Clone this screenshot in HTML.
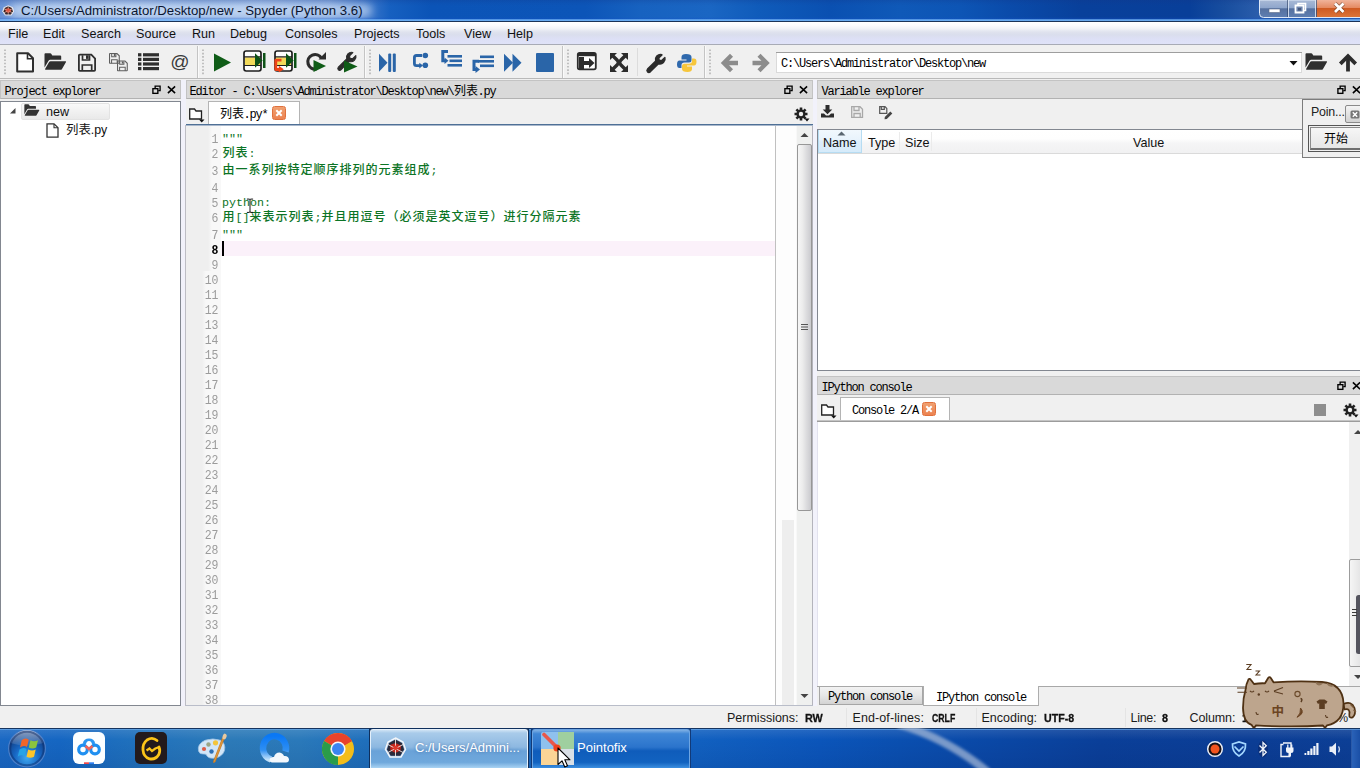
<!DOCTYPE html>
<html lang="zh">
<head>
<meta charset="utf-8">
<title>C:/Users/Administrator/Desktop/new - Spyder (Python 3.6)</title>
<style>
html,body{margin:0;padding:0;width:1360px;height:768px;overflow:hidden;background:#f0f0f0}
body{position:relative;font-family:"Liberation Sans","Noto Sans CJK SC",sans-serif;font-size:12px;color:#000;line-height:1}
div,span,svg{position:absolute;box-sizing:border-box;white-space:pre}
.ui{font-family:"Liberation Sans","Noto Sans CJK SC",sans-serif;font-size:12.6px;color:#111}
.sim{font-family:"Liberation Mono","Noto Serif CJK SC",monospace;font-size:12px;letter-spacing:-1.2px;color:#000;margin-top:.5px}
.code{font-family:"Liberation Mono","Noto Sans CJK SC",monospace;font-size:11.67px;color:#0c7425}
.ln{font-family:"Liberation Mono",monospace;font-size:11.5px;color:#9c9c9c;width:32.500px;height:15px;line-height:15px;text-align:right;left:0;margin-top:2px;transform:scaleY(1.06)}
#titlebar{left:0;top:0;width:1360px;height:22px;background:linear-gradient(to right,#6a93d6 0,#82a8df 40px,#98b8e6 120px,#8aaee2 200px,#90b2e4 260px,#779fdb 330px,#457ccc 362px,#1660c0 390px,#0b54b7 430px,#0c55b8 585px,#1762c0 640px,#1a66c3 710px,#0f5bba 760px,#0a50b1 830px,#0f59b8 900px,#0d55b5 960px,#0a4baa 1010px,#08409b 1080px,#083f99 1190px,#184e9f 1225px,#2a5dab 1258px,#2a5dab 1360px)}
#titlebar .shade{left:0;top:0;width:1360px;height:22px;background:linear-gradient(to bottom,rgba(20,50,130,.22) 0,rgba(20,50,130,.08) 3px,rgba(255,255,255,0) 6px,rgba(255,255,255,0) 17px,rgba(20,80,200,.25) 18.500px,rgba(120,185,250,.85) 19.800px,rgba(120,185,250,.85) 20.600px,#1a3358 21px,#1a3358 22px)}
#title{left:21px;top:4px;font-size:13.2px;color:#0a1530;letter-spacing:0}
#menubar{left:0;top:22px;width:1360px;height:23px;background:linear-gradient(to bottom,#fff 0,#fbfbfd 15%,#f0f2f7 30%,#dfe2ee 46%,#dadeed 58%,#dde0f6 78%,#dfe2f8 100%);border-bottom:1px solid #a8abb6}
#menubar span{top:6px}
#toolbar{left:0;top:45px;width:1360px;height:34px;background:#f0f0f0;border-bottom:1px solid #b9b9b9}
.dock{height:19px;top:80px;background:#d9d9d9;border:1px solid #c3c3c3;border-bottom-color:#b2b2b2}
.dock span.sim{top:4px;left:3.500px}
.panel{background:#fff;border:1px solid #828790}
</style>
</head>
<body>
<div id="titlebar"><div style="left:10px;top:4px;width:362px;height:13px;background:rgba(228,238,252,.6);filter:blur(4px);border-radius:6px"></div><div class="shade"></div>
<svg style="left:1.500px;top:4.500px" width="12.500" height="11.500" viewBox="0 0 23 23" preserveAspectRatio="none"><path d="M11.500 .5 20 4.500 22.500 12.500 17.500 21H5.500L.500 12.500 3 4.500z" fill="#f2efee" opacity=".85"/><path d="M11.500 2.500 18 6 20 12.500 16.300 18.800H6.700L3 12.500 5 6z" fill="#3a2526"/><path d="M6 8 11.500 6 17 8.500 16.500 13.500 11.500 16 6.500 13.500z" fill="#c9402c"/><path d="M11.500 2V20M3 7 20 16M20 7 3 16" stroke="#f0dcd4" stroke-width="1.300" fill="none" opacity=".8"/><circle cx="11.500" cy="10.800" r="2.600" fill="#e0533c"/></svg>
<span id="title">C:/Users/Administrator/Desktop/new - Spyder (Python 3.6)</span>
<svg style="left:1258px;top:0" width="102" height="19" viewBox="0 0 102 19">
<defs>
<linearGradient id="gb" x1="0" y1="0" x2="0" y2="1"><stop offset="0" stop-color="#a9bad6"/><stop offset=".45" stop-color="#8fa6cc"/><stop offset=".5" stop-color="#55709f"/><stop offset="1" stop-color="#5f7fb2"/></linearGradient>
<linearGradient id="gr" x1="0" y1="0" x2="0" y2="1"><stop offset="0" stop-color="#f0b39a"/><stop offset=".45" stop-color="#e58a62"/><stop offset=".5" stop-color="#cf5a22"/><stop offset="1" stop-color="#dc7438"/></linearGradient>
</defs>
<path d="M1.5 0V13.500Q1.500 17.500 5.500 17.500H102V0z" fill="url(#gb)" stroke="#dfe9f7" stroke-width="1"/>
<path d="M58.500 0V17H102V0z" fill="url(#gr)"/>
<path d="M30.500 0V17M57.500 0V17" stroke="#dfe9f7" stroke-width="1" opacity=".85"/>
<path d="M29.500 0V17M58.500 0V17" stroke="#2b3f63" stroke-width="1" opacity=".6"/>
<rect x="11" y="9" width="11" height="3.500" fill="#fff" stroke="#5a6a88" stroke-width=".6"/>
<path d="M40 3.500H47.500V10.500H40z" fill="none" stroke="#fff" stroke-width="1.600"/><path d="M37.500 5.500H45.500V12.500H37.500z" fill="#6d84ad" stroke="#fff" stroke-width="1.800"/><rect x="40" y="8" width="3" height="2.500" fill="#46597e"/>
<path d="M77 3.500 85.500 12M85.500 3.500 77 12" stroke="#4a2a1a" stroke-width="4.200" opacity=".55"/><path d="M77 3.500 85.500 12M85.500 3.500 77 12" stroke="#fff" stroke-width="2.800" stroke-linecap="butt"/>
</svg>
</div>
<div id="menubar" class="ui">
<span style="left:8px">File</span><span style="left:43px">Edit</span><span style="left:81px">Search</span><span style="left:136px">Source</span><span style="left:192px">Run</span><span style="left:230px">Debug</span><span style="left:285px">Consoles</span><span style="left:354px">Projects</span><span style="left:416px">Tools</span><span style="left:464px">View</span><span style="left:507px">Help</span>
</div>
<div id="toolbar">
<svg style="left:0;top:0" width="1360" height="34" viewBox="0 45 1360 34">
<defs>
<g id="hdl"><path d="M0.500 49.500V75.500" stroke="#b4b4b4" stroke-width="1.600" stroke-dasharray="1.600 1.700" fill="none"/></g>
<g id="sep"><path d="M0.500 46V78" stroke="#c4c4c4" stroke-width="1"/><path d="M1.500 46V78" stroke="#fafafa" stroke-width="1"/></g>
<g id="fold"><path d="M0.500 1.200Q0.500 .3 1.400 .3H6.200Q7 .3 7.400 1L8.300 2.600H16.200Q17.200 2.600 17.200 3.600V6.800H6.200Q5 6.800 4.400 7.900L0.500 14.600z"/><path d="M6.600 8.300H21.400Q22.500 8.300 21.900 9.300L18 15.900Q17.500 16.800 16.400 16.800H1.700Q.6 16.800 1.200 15.800L5 9.200Q5.500 8.300 6.600 8.300z"/></g>
<g id="flop"><path d="M1.800 .9H13.300L17.100 4.700V16.200Q17.100 17.100 16.200 17.100H1.800Q.9 17.100 .9 16.200V1.800Q.9 .9 1.800 .9z" fill="none" stroke-width="1.800"/><path d="M4.500 1.500V6.200H11.500V1.500" fill="none" stroke-width="1.700"/><rect x="8" y="1.500" width="2.600" height="3.600" stroke="none"/><path d="M4.300 17V11.200H13.700V17" fill="none" stroke-width="1.700"/></g>
<g id="wr"><path d="M19.300 3.200 15.900 6.600 13.200 6.100 12.700 3.400 16.100 0Q13.300-.9 10.900 1.400 8.800 3.700 9.700 6.700L.9 15.500Q-.3 16.900.9 18.200 2.300 19.400 3.600 18.200L12.400 9.400Q15.500 10.400 17.800 8.200 20.100 5.800 19.300 3.200z"/></g>
</defs>
<use href="#hdl" x="4.500"/>
<!-- new file -->
<path d="M17.200 53.200H28L33 58.200V71.500H17.200z" fill="#fff" stroke="#2f2f2f" stroke-width="2" stroke-linejoin="round"/><path d="M27.500 53.500V58.700H32.700" fill="none" stroke="#2f2f2f" stroke-width="1.600"/>
<!-- open -->
<use href="#fold" x="44" y="53" fill="#2f2f2f"/>
<!-- save -->
<use href="#flop" x="78" y="53.800" fill="#2f2f2f" stroke="#2f2f2f"/>
<!-- save all -->
<g fill="#5e5e5e" stroke="#5e5e5e"><use href="#flop" transform="translate(109 53) scale(.6)"/><use href="#flop" transform="translate(117 60.500) scale(.6)"/></g>
<!-- list -->
<g fill="#2f2f2f"><rect x="138" y="53.200" width="3.400" height="3.200"/><rect x="143" y="53.200" width="16" height="3.200"/><rect x="138" y="57.800" width="3.400" height="3.200"/><rect x="143" y="57.800" width="16" height="3.200"/><rect x="138" y="62.400" width="3.400" height="3.200"/><rect x="143" y="62.400" width="16" height="3.200"/><rect x="138" y="67" width="3.400" height="3.200"/><rect x="143" y="67" width="16" height="3.200"/></g>
<text x="170.300" y="68.300" font-family="Liberation Sans, sans-serif" font-size="19" fill="#3a3a3a">@</text>
<use href="#sep" x="197"/><use href="#hdl" x="202.500"/>
<!-- run -->
<path d="M214 53.500 231 62.500 214 71.500z" fill="#0f5c17"/>
<!-- run cell -->
<g id="cell"><rect x="244" y="51" width="17" height="20" rx="2.200" fill="#fdfdfd" stroke="#1e1e1e" stroke-width="1.700"/><rect x="245" y="57.300" width="15" height="7.700" fill="#f2da5a"/><path d="M244 56.800H261M244 65.500H261" stroke="#1e1e1e" stroke-width="1.200"/><path d="M255 53.200 262.600 60.500 255 67.800z" fill="#0d5216"/><rect x="263" y="53" width="2.500" height="15" fill="#0d5216"/></g>
<use href="#cell" x="31"/>
<path d="M281.500 60.200H275.800V69.500H279.500" fill="none" stroke="#ee4418" stroke-width="2.800" stroke-linejoin="round"/><path d="M278.800 65.800 283.800 69.300 278.800 72.500z" fill="#ee4418"/>
<!-- rerun -->
<path d="M321.500 58.200A7.300 7.300 0 1 0 316.500 69" fill="none" stroke="#2c2c2c" stroke-width="3.200"/><path d="M326 52V59.500H318.500z" fill="#2c2c2c"/><path d="M313.500 60 326 66 313.500 72z" fill="#0f5c17"/>
<!-- wrench run -->
<use href="#wr" transform="translate(337.500 52.500) scale(.95)" fill="#2c2c2c" stroke="#2c2c2c" stroke-width="1.200" stroke-linejoin="round"/><path d="M344 60.500 357.500 66.500 344 72.500z" fill="#0f5c17"/>
<use href="#sep" x="364"/><use href="#hdl" x="369.500"/>
<!-- debug -->
<g fill="#2a65a8">
<path d="M379 53.800 387.500 62.800 379 71.800z"/><rect x="388.200" y="53.500" width="3" height="18.500" rx="1"/><rect x="392.800" y="53.500" width="3" height="18.500" rx="1"/>
<path d="M422 55.500H416.500Q414.400 55.500 414.400 57.600V63.500Q414.400 65.600 416.500 65.600H420" fill="none" stroke="#2a65a8" stroke-width="2.800"/><path d="M419.300 62.800 423 65.600 419.300 68.400z"/><circle cx="425.300" cy="55.500" r="2.800"/><circle cx="425.300" cy="65.300" r="2.800"/>
<rect x="447.500" y="55" width="14.500" height="2.600"/><rect x="449.500" y="59.500" width="12.500" height="2.600"/><rect x="447.500" y="64" width="14.500" height="2.600"/><path d="M448 51.500H442.800V60.800H445" fill="none" stroke="#2a65a8" stroke-width="3"/><path d="M444.500 57.500 448.500 60.800 444.500 64.100z"/>
<rect x="480" y="55.500" width="14" height="2.600"/><rect x="478" y="60" width="16" height="2.600"/><rect x="480" y="64.500" width="14" height="2.600"/><path d="M479 61.300H474V69.500H476.500" fill="none" stroke="#2a65a8" stroke-width="3"/><path d="M475.500 66 480 69.600 475.500 73z"/>
<path d="M504 53.800 513 62.800 504 71.800z"/><path d="M512.500 53.800 521.500 62.800 512.500 71.800z"/>
<rect x="536" y="53" width="18" height="19" rx="1"/>
</g>
<use href="#sep" x="562"/><use href="#hdl" x="567.500"/>
<!-- maximize pane -->
<rect x="577.800" y="52.800" width="18" height="16.600" rx="1.800" fill="#fff" stroke="#2c2c2c" stroke-width="1.800"/><rect x="578" y="53" width="17.500" height="3.200" fill="#2c2c2c"/><path d="M579 57H584V61H589V58L594.500 63 589 68V65H584V69H579z" fill="#2c2c2c"/>
<!-- fullscreen -->
<g fill="#2c2c2c"><path d="M610 53H617L614.700 55.300 619 59.600 616.600 62 612.300 57.700 610 60z"/><path d="M628 53V60L625.700 57.700 621.400 62 619 59.600 623.300 55.300 621 53z"/><path d="M610 72V65L612.300 67.300 616.600 63 619 65.400 614.700 69.700 617 72z"/><path d="M628 72H621L623.300 69.700 619 65.400 621.400 63 625.700 67.300 628 65z"/><rect x="616.500" y="60" width="5" height="5"/></g>
<path d="M637.500 48V76" stroke="#dcdcdc" stroke-width="1"/>
<use href="#wr" transform="translate(646.800 54.800) scale(.93)" fill="#2c2c2c" stroke="#2c2c2c" stroke-width="1.900" stroke-linejoin="round"/>
<!-- python -->
<path d="M686 54Q681.500 54 681.500 57V59.500H686.500V60.500H679.500Q677 60.500 677 64.500 677 68 679.500 68H681.500V65Q681.500 62.500 684.500 62.500H689Q691.500 62.500 691.500 60V57Q691.500 54 686 54z" fill="#2f69ad"/><path d="M687.500 72Q692 72 692 69V66.500H687V65.500H694Q696.500 65.500 696.500 61.800 696.500 58.500 694 58.500H692V61Q692 63.800 689 63.800H684.500Q682 63.800 682 66.500V69Q682 72 687.500 72z" fill="#f6c63c"/>
<use href="#sep" x="704"/><use href="#hdl" x="709.500"/>
<!-- back / forward -->
<g fill="none" stroke="#8c8c8c" stroke-width="4.300"><path d="M738 63H724M731.500 55.300 723.800 63 731.500 70.700"/><path d="M752.500 63H766.500M759 55.300 766.700 63 759 70.700"/></g>
<!-- path combo -->
<rect x="776.500" y="52.500" width="525" height="20" fill="#fff" stroke="#dadada"/><path d="M776 52.500H1302" stroke="#9e9e9e"/>
<path d="M1289.500 61H1297.500L1293.500 65.500z" fill="#111"/>
<use href="#fold" x="1305" y="53" fill="#2f2f2f"/>
<path d="M1348 71.500V57" stroke="#2c2c2c" stroke-width="3.800"/><path d="M1340.300 63.800 1348 56.200 1355.700 63.800" fill="none" stroke="#2c2c2c" stroke-width="3.800"/>
</svg>
<span class="sim" style="left:781px;top:12px">C:\Users\Administrator\Desktop\new</span>
</div>
<style>
.fl{width:9px;height:9.500px}
.zh{font-family:"Noto Sans CJK SC",sans-serif;font-size:12px;line-height:12px;letter-spacing:0;color:#000}
.tabrow{background:#f0f0f0}
.tab{background:#fff;border:1px solid #b4b4b4;border-bottom:none}
.cls{width:14px;height:14px;border-radius:2.500px;background:linear-gradient(#f0a070,#ec8250);border:1px solid #e0703c}
.ln.cur{color:#000;font-weight:bold}
.cj{position:static;font-size:12px;letter-spacing:1px;font-weight:500}
.cl{left:36px;height:15px;line-height:15px;margin-top:1.700px}
.cl.z{left:36.500px;height:17px;line-height:17px;margin-top:.5px}
.hd{top:1px;height:23px;line-height:24px;font-size:12.6px;color:#111}
.sb{font-size:12.5px;color:#1a1a1a;top:6px}
.sbb{-webkit-text-stroke:.3px #111;position:absolute;top:6.500px;font-family:"Liberation Sans",sans-serif;font-weight:bold;font-size:11.8px;color:#111;transform-origin:0 50%;white-space:pre}
</style>
<!-- Project explorer -->
<div class="dock" style="left:0;width:181px"><span class="sim">Project explorer</span>
<svg class="fl" style="left:151px;top:4px" viewBox="0 0 10 10"><path d="M3.500 3V1H9V6H7" fill="none" stroke="#000" stroke-width="1.500"/><rect x="1" y="3.800" width="5.500" height="5.200" fill="none" stroke="#000" stroke-width="1.500"/></svg>
<svg class="fl" style="left:166px;top:4px" viewBox="0 0 10 10"><path d="M1 1.200 9 8.800M9 1.200 1 8.800" stroke="#000" stroke-width="1.700"/></svg></div>
<div style="left:181px;top:80px;width:5px;height:626px;background:#f1f1fa"></div><div style="left:185px;top:125px;width:1px;height:581px;background:#bdbdc4"></div>
<div class="panel" style="left:0;top:101px;width:181px;height:605px">
<div style="left:20px;top:1px;width:89px;height:17px;border:1px solid #e3e3e3;border-radius:2px;background:linear-gradient(#f9f9f9,#e9e9e9)"></div>
<svg style="left:7.500px;top:4.800px" width="8" height="8" viewBox="0 0 8 8"><path d="M6.500 1V6.500H1z" fill="#444"/></svg>
<svg style="left:23px;top:2px" width="16" height="12" viewBox="0 0 23 17"><path d="M0.500 1.200Q0.500 .3 1.400 .3H6.200Q7 .3 7.400 1L8.300 2.600H16.200Q17.200 2.600 17.200 3.600V6.800H6.200Q5 6.800 4.400 7.900L0.500 14.600z" fill="#333"/><path d="M6.600 8.300H21.400Q22.500 8.300 21.900 9.300L18 15.900Q17.500 16.800 16.400 16.800H1.700Q.6 16.800 1.200 15.800L5 9.200Q5.500 8.300 6.600 8.300z" fill="#333"/></svg>
<span class="ui" style="left:45px;top:4px;font-size:12.6px">new</span>
<svg style="left:44.500px;top:20.500px" width="13" height="15" viewBox="0 0 13 16" preserveAspectRatio="none"><path d="M1 1H8L12 5V15H1z" fill="#fff" stroke="#333" stroke-width="1.300"/><path d="M8 1V5H12" fill="none" stroke="#333" stroke-width="1.100"/></svg>
<span class="ui" style="left:65px;top:22px;font-size:12.4px">列表.py</span>
</div>
<!-- Editor -->
<div class="dock" style="left:186px;width:627px"><span class="sim" style="left:2.500px">Editor - C:\Users\Administrator\Desktop\new\</span><span class="zh" style="left:267px;top:3px">列表</span><span class="sim" style="left:290.500px">.py</span>
<svg class="fl" style="left:597px;top:4px" viewBox="0 0 10 10"><path d="M3.500 3V1H9V6H7" fill="none" stroke="#000" stroke-width="1.500"/><rect x="1" y="3.800" width="5.500" height="5.200" fill="none" stroke="#000" stroke-width="1.500"/></svg>
<svg class="fl" style="left:612px;top:4px" viewBox="0 0 10 10"><path d="M1 1.200 9 8.800M9 1.200 1 8.800" stroke="#000" stroke-width="1.700"/></svg></div>
<div class="tabrow" style="left:186px;top:100px;width:627px;height:25px">
<svg style="left:2px;top:7px" width="18" height="16" viewBox="0 0 18 16"><path d="M1.700 2H6.500L8 4H13.500V12H1.700z" fill="#fff" stroke="#222" stroke-width="1.300"/><path d="M11 12.500H16.500L13.700 15.500z" fill="#111"/></svg>
<div class="tab" style="left:22px;top:1px;width:92px;height:24px"><span class="zh" style="left:11px;top:5px">列表</span><span class="sim" style="left:34.500px;top:6px">.py*</span><div class="cls" style="left:63px;top:4px"><svg width="12" height="12" viewBox="0 0 12 12" style="left:0;top:0"><path d="M3.300 3.300 8.700 8.700M8.700 3.300 3.300 8.700" stroke="#fff" stroke-width="2"/></svg></div></div>
<svg style="left:608px;top:7px" width="16" height="15" viewBox="0 0 16 15"><g fill="#222"><circle cx="7" cy="7" r="4.600"/><g stroke="#222" stroke-width="2.600"><path d="M7 .5V13.500M.500 7H13.500M2.400 2.400 11.600 11.600M11.600 2.400 2.400 11.600"/></g></g><circle cx="7" cy="7" r="2.200" fill="#f0f0f0"/><path d="M10.500 11.500H15.500L13 14.500z" fill="#111"/></svg>
</div>
<div style="left:186px;top:124px;width:627px;height:1px;background:#4f7096"></div>
<div id="editor" style="left:186px;top:125px;width:627px;height:581px;background:#fff;overflow:hidden"><div style="left:0;top:0;width:627px;height:1px;background:#a9b8cc;z-index:3"></div>
<div style="left:0;top:0;width:35px;height:581px;background:#f8f8f8"></div><div style="left:0;top:0;width:22px;height:146px;background:#efefef"></div><div style="left:0;top:146px;width:16px;height:435px;background:#efefef"></div><div style="left:22px;top:0;width:4px;height:146px;background:linear-gradient(to right,#efefef,#f8f8f8)"></div><div style="left:16px;top:146px;width:4px;height:435px;background:linear-gradient(to right,#efefef,#f8f8f8)"></div>
<div style="left:35px;top:115.500px;width:555px;height:15px;background:#fbf1fa"></div>
<span class="ln" style="top:5px">1</span><span class="ln" style="top:20px">2</span><span class="ln" style="top:37px">3</span><span class="ln" style="top:54px">4</span><span class="ln" style="top:69px">5</span><span class="ln" style="top:84px">6</span><span class="ln" style="top:101px">7</span><span class="ln cur" style="top:116px">8</span><span class="ln" style="top:131px">9</span><span class="ln" style="top:146px">10</span><span class="ln" style="top:161px">11</span><span class="ln" style="top:176px">12</span><span class="ln" style="top:191px">13</span><span class="ln" style="top:206px">14</span><span class="ln" style="top:221px">15</span><span class="ln" style="top:236px">16</span><span class="ln" style="top:251px">17</span><span class="ln" style="top:266px">18</span><span class="ln" style="top:281px">19</span><span class="ln" style="top:296px">20</span><span class="ln" style="top:311px">21</span><span class="ln" style="top:326px">22</span><span class="ln" style="top:341px">23</span><span class="ln" style="top:356px">24</span><span class="ln" style="top:371px">25</span><span class="ln" style="top:386px">26</span><span class="ln" style="top:401px">27</span><span class="ln" style="top:416px">28</span><span class="ln" style="top:431px">29</span><span class="ln" style="top:446px">30</span><span class="ln" style="top:461px">31</span><span class="ln" style="top:476px">32</span><span class="ln" style="top:491px">33</span><span class="ln" style="top:506px">34</span><span class="ln" style="top:521px">35</span><span class="ln" style="top:536px">36</span><span class="ln" style="top:551px">37</span><span class="ln" style="top:566px">38</span>

<span class="code cl" style="top:5px">"""</span>
<span class="code cl z" style="top:20px"><span class="cj">列表</span>:</span>
<span class="code cl z" style="top:37px"><span class="cj">由一系列按特定顺序排列的元素组成</span>;</span>
<span class="code cl" style="top:69px">python:</span>
<span class="code cl z" style="top:84px"><span class="cj">用</span>[]<span class="cj">来表示列表</span>;<span class="cj">并且用逗号（必须是英文逗号）进行分隔元素</span></span>
<span class="code cl" style="top:101px">"""</span>
<div style="left:36px;top:116px;width:2px;height:15px;background:#000"></div>
<svg style="left:59.500px;top:72.500px" width="8" height="15.500" viewBox="0 0 9 17"><path d="M1 1H3.500Q4.500 1 4.500 2V15Q4.500 16 3.500 16H1M8 1H5.500Q4.500 1 4.500 2M4.500 15Q4.500 16 5.500 16H8" fill="none" stroke="#111" stroke-width="1.100"/></svg>
<div style="left:589px;top:0;width:1px;height:581px;background:#c0c0c0"></div>
<div style="left:590px;top:0;width:20px;height:581px;background:#fdfdfd"></div><div style="left:596px;top:395px;width:12px;height:185px;background:#eeeeee"></div>
<!-- scrollbar -->
<div style="left:610px;top:0;width:17px;height:581px;background:#eff0ef;border-left:1px solid #f8f8f8;border-right:1px solid #b4b4bc"></div>
<div style="left:611px;top:19px;width:15px;height:367px;border:1px solid #979797;border-radius:2px;background:linear-gradient(to right,#f6f6f6 0,#ececec 35%,#dcdcde 65%,#cacace 100%)"></div>
<svg style="left:611px;top:6px" width="15" height="8" viewBox="0 0 15 8"><path d="M3.500 6 7.500 2 11.500 6z" fill="#444"/></svg>
<svg style="left:611px;top:567px" width="15" height="8" viewBox="0 0 15 8"><path d="M3.500 2 7.500 6 11.500 2z" fill="#444"/></svg>
<svg style="left:614px;top:198px" width="9" height="9" viewBox="0 0 9 9"><path d="M1 1.500H8M1 4H8M1 6.500H8" stroke="#555" stroke-width="1"/></svg>
<div style="left:0;top:580px;width:627px;height:1px;background:#b9bdc9"></div>
</div>
<!-- splitter -->
<div style="left:813px;top:80px;width:4px;height:626px;background:#f2f2fb"></div>
<!-- Variable explorer -->
<div class="dock" style="left:817px;width:560px"><span class="sim">Variable explorer</span>
<svg class="fl" style="left:519px;top:4px" viewBox="0 0 10 10"><path d="M3.500 3V1H9V6H7" fill="none" stroke="#000" stroke-width="1.500"/><rect x="1" y="3.800" width="5.500" height="5.200" fill="none" stroke="#000" stroke-width="1.500"/></svg>
<svg class="fl" style="left:534px;top:4px" viewBox="0 0 10 10"><path d="M1 1.200 9 8.800M9 1.200 1 8.800" stroke="#000" stroke-width="1.700"/></svg></div>
<svg style="left:820px;top:104px" width="76" height="17" viewBox="820 104 76 17">
<path d="M825.500 105H829.500V109.500H832.300L827.500 114.300 822.700 109.500H825.500z" fill="#2c2c2c"/><path d="M821 113.500H824L826 115.500H829L831 113.500H834V117.500H821z" fill="#2c2c2c"/>
<g fill="none" stroke="#a8a8a8" stroke-width="1.300"><path d="M851.700 106.700H860L862.500 109.200V117.300H851.700z"/><path d="M854 107V110.500H859V107M854 117V113.500H860.200V117"/></g>
<g fill="none" stroke="#555" stroke-width="1.200"><path d="M879.700 106.700H885L886.800 108.500V113.300H879.700z"/><path d="M881.300 107V109.300H884.300V107"/></g>
<path d="M884.800 117 890.300 111.500 892.300 113.500 886.800 119 884.500 119.300z" fill="#444"/>
</svg>
<div class="panel" style="left:817px;top:129px;width:560px;height:242px">
<div style="left:0;top:0;width:558px;height:24px;background:linear-gradient(#fff 0,#fefefe 38%,#f5f5f6 58%,#f1f1f2 100%);border-bottom:1px solid #dadada"></div>
<div style="left:0;top:0;width:44px;height:23px;background:linear-gradient(#f1f8fd 0,#e8f3fc 45%,#ddeefb 50%,#d6ebfa 100%);border:1px solid #b6dcf2;border-top:none"></div>
<svg style="left:19px;top:1px" width="9" height="5" viewBox="0 0 9 5"><path d="M0.500 4.500 4.500 .5 8.500 4.500z" fill="#5a6670"/></svg>
<div style="left:81px;top:2px;width:1px;height:19px;background:#ebebeb"></div>
<div style="left:113px;top:2px;width:1px;height:19px;background:#ebebeb"></div>
<span class="ui hd" style="left:5px">Name</span><span class="ui hd" style="left:50px">Type</span><span class="ui hd" style="left:87px">Size</span><span class="ui hd" style="left:315px">Value</span>
</div>
<!-- IPython console -->
<div class="dock" style="left:817px;top:376px;width:560px"><span class="sim">IPython console</span>
<svg class="fl" style="left:519px;top:4px" viewBox="0 0 10 10"><path d="M3.500 3V1H9V6H7" fill="none" stroke="#000" stroke-width="1.500"/><rect x="1" y="3.800" width="5.500" height="5.200" fill="none" stroke="#000" stroke-width="1.500"/></svg>
<svg class="fl" style="left:534px;top:4px" viewBox="0 0 10 10"><path d="M1 1.200 9 8.800M9 1.200 1 8.800" stroke="#000" stroke-width="1.700"/></svg></div>
<div class="tabrow" style="left:817px;top:396px;width:560px;height:25px">
<svg style="left:3px;top:7px" width="18" height="16" viewBox="0 0 18 16"><path d="M1.700 2H6.500L8 4H13.500V12H1.700z" fill="#fff" stroke="#222" stroke-width="1.300"/><path d="M11 12.500H16.500L13.700 15.500z" fill="#111"/></svg>
<div class="tab" style="left:23px;top:1px;width:110px;height:24px"><span class="sim" style="left:11px;top:6px">Console 2/A</span><div class="cls" style="left:81px;top:4px"><svg width="12" height="12" viewBox="0 0 12 12" style="left:0;top:0"><path d="M3.300 3.300 8.700 8.700M8.700 3.300 3.300 8.700" stroke="#fff" stroke-width="2"/></svg></div></div>
<div style="left:497px;top:8px;width:12px;height:12px;background:#8e8e8e"></div>
<svg style="left:526px;top:7px" width="16" height="15" viewBox="0 0 16 15"><g fill="#222"><circle cx="7" cy="7" r="4.600"/><g stroke="#222" stroke-width="2.600"><path d="M7 .5V13.500M.500 7H13.500M2.400 2.400 11.600 11.600M11.600 2.400 2.400 11.600"/></g></g><circle cx="7" cy="7" r="2.200" fill="#f0f0f0"/><path d="M10.500 11.500H15.500L13 14.500z" fill="#111"/></svg>
</div>
<div style="left:817px;top:420px;width:560px;height:1px;background:#c4c4c4"></div><div style="left:817px;top:421px;width:560px;height:1px;background:#9c9c9c"></div>
<div style="left:817px;top:422px;width:560px;height:264px;background:#fff;border-left:1px solid #e2e2ee"></div>
<div style="left:1349px;top:422px;width:11px;height:264px;background:#f0f0f0"></div>
<svg style="left:1353px;top:429px" width="10" height="6" viewBox="0 0 10 6"><path d="M1 5 5 1 9 5z" fill="#444"/></svg>
<svg style="left:1353px;top:674px" width="10" height="6" viewBox="0 0 10 6"><path d="M1 1 5 5 9 1z" fill="#444"/></svg>
<div style="left:1349px;top:559px;width:17px;height:108px;border:1px solid #9c9c9c;border-radius:2px;background:linear-gradient(to right,#f5f5f5 0,#ececec 40%,#dcdcde 100%)"></div>
<div style="left:1356px;top:595px;width:12px;height:59px;background:#54545e;border-radius:2.500px"></div>
<svg style="left:1352px;top:608px" width="5" height="9" viewBox="0 0 5 9"><path d="M0 1.500H5M0 4.500H5M0 7.500H5" stroke="#3a3a3a" stroke-width="1.100"/></svg>
<!-- bottom tabs -->
<div style="left:817px;top:686px;width:543px;height:20px;background:#f0f0f0;border-top:1px solid #a8a8a8"></div>
<div style="left:819px;top:687px;width:104px;height:17.500px;background:linear-gradient(#f3f3f3 0,#e6e6e6 50%,#d3d3d3 100%);border:1px solid #a6a6a6;border-top:none"></div>
<div style="left:923px;top:686px;width:116px;height:20px;background:#fff;border:1px solid #adadad;border-top:none"></div>
<span class="sim" style="left:828px;top:690px">Python console</span><span class="sim" style="left:936px;top:691px">IPython console</span>
<!-- status bar -->
<div id="status" style="left:0;top:706px;width:1360px;height:22px;background:#f0f0f0">
<span class="sb" style="left:727px">Permissions:</span><b class="sbb" style="left:805px;transform:scaleX(.915)">RW</b>
<span class="sb" style="left:852.500px;letter-spacing:.1px">End-of-lines:</span><b class="sbb" style="left:931.500px;transform:scaleX(.74)">CRLF</b>
<span class="sb" style="left:981.500px">Encoding:</span><b class="sbb" style="left:1044.300px;transform:scaleX(.9)">UTF-8</b>
<span class="sb" style="left:1130.500px;letter-spacing:-.3px">Line:</span><b class="sbb" style="left:1162px;transform:scaleX(.92)">8</b>
<span class="sb" style="left:1189.500px;letter-spacing:-.1px">Column:</span><b class="sbb" style="left:1242px;transform:scaleX(.92)">1</b><span class="sb" style="left:1337px">%</span>
<div style="left:846px;top:2px;width:1px;height:19px;background:#e4e4e4"></div><div style="left:976px;top:2px;width:1px;height:19px;background:#e4e4e4"></div><div style="left:1125px;top:2px;width:1px;height:19px;background:#e4e4e4"></div>
</div>
<!-- Pointofix floating panel -->
<div style="left:1302px;top:99px;width:70px;height:59px;background:#f0f0f0;border:1px solid #7c7c7c">
<span class="ui" style="left:8px;top:6.300px;font-size:12.4px;letter-spacing:-.2px;color:#222">Poin...</span>
<div style="left:42px;top:4.500px;width:24px;height:18px;border:1px solid #8a8a8a;border-radius:2px;background:linear-gradient(#f4f4f4,#d2d2d2)"><svg style="left:4px;top:4px" width="10" height="9" viewBox="0 0 10 9"><rect x=".5" y=".5" width="9" height="8" rx="1.500" fill="#777"/><path d="M2.800 2.300 7.200 6.700M7.200 2.300 2.800 6.700" stroke="#fff" stroke-width="1.500"/></svg></div>
<div style="left:5px;top:25px;width:64px;height:27px;border:1px solid #555;background:#f0f0f0"></div>
<div style="left:7px;top:27px;width:60px;height:23px;border:1px solid #8c8c8c;border-bottom:2px solid #6e6e6e;background:linear-gradient(#f6f6f6,#e6e6e6)"></div>
<span class="ui" style="left:21px;top:33px;font-size:12px;color:#000;font-family:'Liberation Sans','Noto Sans CJK SC',sans-serif">开始</span>
</div>
<!-- sleeping cat -->
<svg style="left:1234px;top:660px" width="126" height="70" viewBox="1234 660 126 70">
<g fill="none" stroke="#5b3d22" stroke-width="1.100"><path d="M1246.300 664.500H1251L1247 669.500H1251.500"/><path d="M1255.500 671H1259.500L1256 675H1260.500"/></g>
<path d="M1343.500 704Q1351.500 700.500 1354.500 708 1356.300 714.500 1352.500 717.500 1349 718.500 1349.300 714.500 1350.500 708 1344.500 709.500z" fill="#bda58d" stroke="#4f3113" stroke-width="1.700"/><path d="M1350.500 704.500 1353.500 707.500M1353.500 710 1356 712" stroke="#7a5a3a" stroke-width="1.300" fill="none"/>
<path d="M1245.500 690Q1246 684 1248.500 679.300 1249.800 678.300 1251 680L1254 684Q1260 683 1265 683.300L1268.300 677.800Q1269.500 676.300 1270.800 678L1273.500 682.300Q1300 680.500 1322 682Q1342.500 683.500 1343.500 703Q1343.800 722 1327 725.300L1326 726.800Q1324.500 727.800 1323.300 726L1322.800 725.500Q1290 727.500 1256 725.300L1255.300 726.500Q1253.800 727.800 1252.500 726.300L1251.500 724.800Q1243.300 722 1243 708Q1243 698 1245.500 690z" fill="#bda58d" stroke="#4f3113" stroke-width="1.800" stroke-linejoin="round"/>
<path d="M1316 682.500Q1318.500 687 1322.500 683M1327 683.300Q1330 687.500 1333.500 685.500" fill="#8f7458" stroke="#8f7458" stroke-width="1.400"/>
<g fill="none" stroke="#5b3d22" stroke-width="1.100"><path d="M1237 688H1247M1237.500 692.300H1247M1274 691 1283 687.500M1274 691.500 1283 694"/><path d="M1250 690.800Q1252 693.300 1254 690.800M1265 690.800Q1267 693.300 1269 690.800"/><circle cx="1297.500" cy="694" r="2.600" stroke="#6b4a2a"/><path d="M1256 712Q1256.500 715.500 1258.500 714M1325.500 715Q1326 718.500 1328 717"/></g>
<circle cx="1258.800" cy="694.500" r="1.200" fill="#5b3d22"/><path d="M1300.500 698.500Q1303 699 1301 702" fill="none" stroke="#5b3d22" stroke-width="1.500"/>
<text x="1271.500" y="716" font-family="Liberation Sans, Noto Sans CJK SC, sans-serif" font-size="12.500" fill="#6b4423" font-weight="bold">中</text>
<path d="M1300.500 708Q1305.500 713 1297 717.300Q1301.300 713.500 1300.500 708z" fill="#6b4423" stroke="#6b4423" stroke-width="1"/>
<path d="M1316.500 701.500 1319.500 699.500H1324.500L1327.500 701.500 1326 704 1324.800 703.300V709H1319.200V703.300L1318 704z" fill="#5b3d22"/>
</svg>
<!-- taskbar -->
<div id="taskbar" style="left:0;top:728px;width:1360px;height:40px;background:linear-gradient(to right,#1a68c3 0,#1566c2 60px,#1f70bd 130px,#2c7ab8 230px,#2a79ba 300px,#1f6fbc 365px,#1160c0 700px,#0b55ba 820px,#0a4fb0 900px,#0a47a5 1000px,#0a3f99 1100px,#0b3d95 1250px,#0c3f96 1360px);overflow:hidden">
<div style="left:0;top:0;width:1360px;height:40px;background:linear-gradient(to bottom,#16345f 0,#16345f 1px,rgba(120,180,240,.75) 1px,rgba(120,180,240,.6) 2px,rgba(255,255,255,.1) 2px,rgba(255,255,255,0) 12px,rgba(0,0,40,.08) 40px)"></div>
<svg style="left:860px;top:0" width="180" height="40" viewBox="0 0 180 40"><defs><filter id="bl" x="-20%" y="-20%" width="140%" height="140%"><feGaussianBlur stdDeviation="1.800"/></filter></defs><path d="M38 -4Q86 10 128 44" fill="none" stroke="#9fb4d4" stroke-width="8" opacity=".75" filter="url(#bl)"/></svg>
<!-- start orb -->
<svg style="left:6px;top:1px" width="42" height="40" viewBox="0 0 42 40">
<defs><radialGradient id="orb" cx=".5" cy=".75" r=".75"><stop offset="0" stop-color="#3fa9f0"/><stop offset=".45" stop-color="#1767c4"/><stop offset="1" stop-color="#10306e"/></radialGradient><linearGradient id="orbh" x1="0" y1="0" x2="0" y2="1"><stop offset="0" stop-color="#fff" stop-opacity=".55"/><stop offset="1" stop-color="#fff" stop-opacity=".08"/></linearGradient></defs>
<circle cx="21" cy="19.500" r="18.300" fill="url(#orb)" stroke="#4c7fc8" stroke-width="1.300"/>
<path d="M4.500 14A17 17 0 0 1 37.500 14Q21 19.500 4.500 14z" fill="url(#orbh)"/><circle cx="21" cy="19.500" r="16.800" fill="none" stroke="#0c2a66" stroke-width="2" opacity=".45"/>
<g transform="translate(3.200 -.3)"><path d="M12.500 11.500Q16 8.500 19.500 11L17.800 18.300Q14.500 16 10.800 18.800z" fill="#f2652a"/><path d="M21.300 11.500Q25 13.800 28.800 11.500L27 18.800Q23.300 21 19.500 18.800z" fill="#8bc53f"/><path d="M10.300 20.800Q14 18 17.300 20.300L15.500 27.500Q12 25.300 8.500 28z" fill="#27a3e6"/><path d="M19 20.800Q22.800 23 26.500 20.800L24.800 28Q21 30.300 17.300 28z" fill="#fdc52a"/></g>
</svg>
<!-- baidu netdisk -->
<svg style="left:73px;top:4px" width="32" height="32" viewBox="0 0 32 32"><rect x="0" y="0" width="32" height="32" rx="6" fill="#fcfeff"/><g fill="none" stroke-width="3.200" transform="translate(0 -1.500)"><circle cx="10" cy="19" r="4.300" stroke="#1e8ff0"/><circle cx="22" cy="19" r="4.300" stroke="#1e8ff0"/><path d="M11.300 13.500A4.800 4.800 0 0 1 20.700 13.500" stroke="#2b96f2"/><path d="M12.500 15.500 16 18.500 19.500 15.500" stroke="#f0655a" stroke-width="2.800"/><circle cx="16" cy="13" r="2.500" fill="#fff" stroke="none"/></g><rect x="11" y="30.300" width="5" height="1.700" fill="#f04848"/><rect x="16" y="30.300" width="5" height="1.700" fill="#2d7ff0"/></svg>
<!-- G icon -->
<svg style="left:135px;top:4px" width="32" height="32" viewBox="0 0 32 32"><rect x="0" y="0" width="32" height="32" rx="5" fill="#231a1c"/><path d="M22 8.500Q17.500 4.500 12 8 7.500 11.500 8 18 8.500 25 14.500 26.800 20.500 28 23.800 22.500 25.500 18.500 24 15" fill="none" stroke="#fcc419" stroke-width="2.800" stroke-linecap="round"/><path d="M11.500 18.500 14.500 16.500 17 19 20.300 16.500 24.500 15" fill="none" stroke="#fcc419" stroke-width="2.200"/></svg>
<!-- paint -->
<svg style="left:196px;top:4px" width="34" height="33" viewBox="0 0 34 33"><path d="M2.500 19Q1 12 9 8.300 17 5.500 24.500 8.300 30 11.500 28.500 18.500 26.500 24.500 19.500 26 13 27 11 24 10.500 21.500 7.500 22 3.500 22.500 2.500 19z" fill="#d2e6f8" stroke="#9bbfe0" stroke-width=".8"/><circle cx="19.500" cy="10.800" r="2.600" fill="#f3c53c"/><circle cx="12.500" cy="12.500" r="2.200" fill="#9aa486"/><circle cx="8" cy="17" r="2.100" fill="#dc5d48"/><circle cx="15.500" cy="19.500" r="2.200" fill="#2d6fb5"/><path d="M29.500 3 28 7 19 30 17.500 30.500 17.800 28.500 26.500 6z" fill="#e79a3a" stroke="#c47a22" stroke-width=".8"/><path d="M26.300 6.500Q26.500 2.500 28.500 1.500 31.500 2 30.500 5 29.500 7.500 28 7.500z" fill="#e8c9a0"/></svg>
<!-- cloud -->
<svg style="left:258px;top:3px" width="34" height="34" viewBox="0 0 34 34"><defs><linearGradient id="cl" x1="0" y1="0" x2="0" y2="1"><stop offset="0" stop-color="#0a78f5"/><stop offset=".6" stop-color="#2f8ff2"/><stop offset="1" stop-color="#bfe0fa"/></linearGradient></defs><path d="M27.500 20.500A11.500 12 0 1 0 13 28.500" fill="none" stroke="url(#cl)" stroke-width="6.500"/><path d="M14 31.500Q10.500 31 12 27.500 13.500 25.500 16 26 17 21.500 21.500 21.500 25 22 26 25 30.500 24.500 31 28.500 31 31.500 28 31.500z" fill="#f4f8fc"/></svg>
<!-- chrome -->
<svg style="left:321px;top:4px" width="34" height="34" viewBox="0 0 34 34"><circle cx="17" cy="17" r="16" fill="#f3bd1a"/><path d="M17 17 3.140 9A16 16 0 0 1 30.860 9z" fill="#e8432b"/><path d="M17 17 3.140 9A16 16 0 0 0 17 33z" fill="#2a9c4b"/><path d="M17 17 30.860 9H17z" fill="#e8432b"/><circle cx="17" cy="17" r="7.600" fill="#f4f6f8"/><circle cx="17" cy="17" r="6" fill="#3b85f0"/></svg>
<!-- active task: spyder -->
<div style="left:369px;top:0;width:160px;height:40px;background:#0f2f5c"></div>
<div style="left:370px;top:1px;width:158px;height:39px;border-radius:3px 3px 0 0;background:linear-gradient(to bottom,#cfe2f4 0,#a9cbea 8%,#8db8e1 45%,#6aa2d8 55%,#6fa8dc 85%,#a9d3f3 100%);border:1px solid #e4f0fb;border-bottom:none"></div>
<svg style="left:384px;top:9px" width="23" height="23" viewBox="0 0 23 23"><path d="M11.500 1 19 5 21.500 12.500 17 20H6L1.500 12.500 4 5z" fill="none" stroke="#f3f6fa" stroke-width="1.500"/><path d="M11.500 2.500 18 6 20 12.500 16.300 18.800H6.700L3 12.500 5 6z" fill="#2b2a3a"/><path d="M6 8 11.500 6 17 8.500 16.500 13.500 11.500 16 6.500 13.500z" fill="#c3271d"/><path d="M11.500 2V20M3 7 20 16M20 7 3 16" stroke="#f0e8e4" stroke-width=".9" fill="none"/><circle cx="11.500" cy="10.800" r="2.300" fill="#e0392c"/></svg>
<span class="ui" style="left:415px;top:13px;font-size:13px;color:#fff;text-shadow:0 0 3px rgba(40,80,140,.6)">C:/Users/Admini...</span>
<!-- pointofix task -->
<div style="left:531px;top:0;width:160px;height:40px;background:#123a78"></div>
<div style="left:532px;top:1px;width:158px;height:39px;border-radius:3px 3px 0 0;background:linear-gradient(to bottom,#7fb0e4 0,#3f86d6 10%,#2b74cc 45%,#0f5cbb 55%,#1263c0 85%,#3d8fe0 100%);border:1px solid #6da5e2;border-bottom:none"></div>
<svg style="left:541px;top:4px" width="33" height="33" viewBox="0 0 33 33"><rect x="0" y="0" width="33" height="33" rx="2" fill="#8fc1ee"/><rect x="17" y="0" width="16" height="18" fill="#9fcf9f"/><rect x="0" y="17" width="18" height="16" fill="#fbd596"/><rect x="17" y="17" width="16" height="16" fill="#d9dfe6"/><path d="M3 2.500 15.500 15" stroke="#e8574b" stroke-width="3.600" stroke-linecap="round"/><circle cx="16" cy="16" r="3.600" fill="#f0431c"/></svg>
<span class="ui" style="left:577px;top:13px;font-size:13px;color:#fff">Pointofix</span>
<svg style="left:557px;top:19px" width="15" height="21" viewBox="0 0 15 21"><path d="M1 1V17.500L5 13.800 7.800 20 10.500 18.800 7.800 12.800H13z" fill="#fff" stroke="#000" stroke-width="1.100" stroke-linejoin="round"/></svg>
<!-- tray -->
<svg style="left:1200px;top:10px" width="150" height="24" viewBox="1200 738 150 24">
<circle cx="1215" cy="749" r="7.300" fill="#1a1216" stroke="#e9edf5" stroke-width="1.500"/><circle cx="1215" cy="749" r="4.500" fill="#f2541f"/>
<path d="M1232.500 744 1239 742 1245.500 744Q1246 752 1239 756 1232 752 1232.500 744z" fill="none" stroke="#a5d8ff" stroke-width="1.700"/><path d="M1234.500 746.500 1239 751 1243.500 746.500" fill="none" stroke="#a5d8ff" stroke-width="1.700"/>
<ellipse cx="1263" cy="749" rx="5" ry="8.500" fill="#0a2f7a"/><path d="M1259.500 745.500 1266.300 752.300 1263 755.500V742.500L1266.300 745.700 1259.500 752.500" fill="none" stroke="#f0f4fa" stroke-width="1.300"/>
<g fill="none" stroke="#f0f4fa" stroke-width="1.400"><path d="M1283.500 744.500H1281V756.500H1289.500V755M1283 743H1291V748"/></g><path d="M1286 747.500H1293.500V750.500Q1293.500 753 1291 753V756.500H1288.500V753Q1286 753 1286 750.500z" fill="#f0f4fa"/><path d="M1287.800 744.500V748M1291.700 744.500V748" stroke="#f0f4fa" stroke-width="1.300"/>
<g fill="#f0f4fa"><rect x="1304.500" y="753" width="1.800" height="2"/><rect x="1307.300" y="751" width="2.200" height="4"/><rect x="1310.300" y="748.500" width="2.200" height="6.500"/><rect x="1313.300" y="746" width="2.200" height="9"/><rect x="1316.300" y="743" width="2.200" height="12"/></g>
<path d="M1329.500 746.500H1332L1336 742.800V755.800L1332 752H1329.500z" fill="#e8eef7"/><path d="M1338.500 746.300Q1340.500 749.300 1338.500 752.300" fill="none" stroke="#c5d6ee" stroke-width="1.200"/>
</svg>
<div style="left:1351px;top:2px;width:1px;height:38px;background:#2b5aa8"></div>
<div style="left:1352px;top:2px;width:8px;height:38px;background:linear-gradient(to right,#2a62b8,#1a4fa6)"></div>
</div>
</body>
</html>
